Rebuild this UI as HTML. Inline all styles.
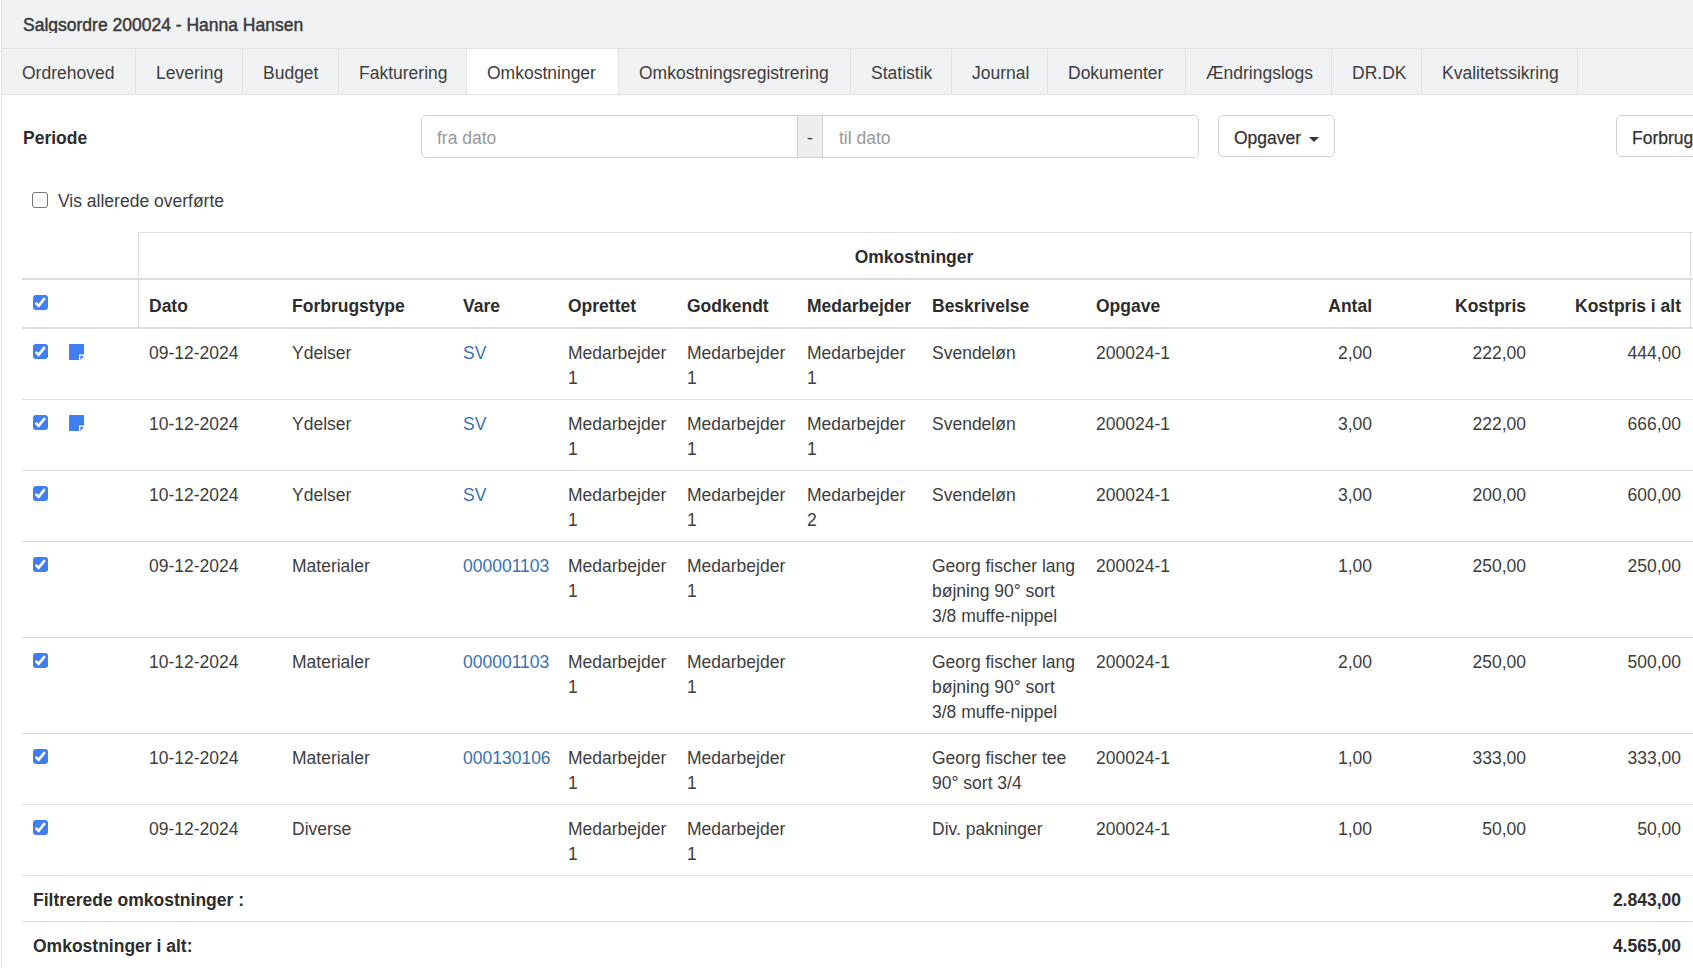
<!DOCTYPE html>
<html><head><meta charset="utf-8">
<style>
html,body{margin:0;padding:0;}
body{width:1693px;height:968px;overflow:hidden;position:relative;background:#fff;font-family:"Liberation Sans",sans-serif;font-size:17.5px;color:#3d3d3d;}
.b{position:absolute;box-sizing:content-box;}
.t{position:absolute;line-height:25px;white-space:nowrap;}
.bold{font-weight:bold;color:#2d2d2d;}
.sb{-webkit-text-stroke:0.45px #333;}
.ph{color:#999;}
.link{color:#3872b6;}
.btn{color:#333;-webkit-text-stroke:0.25px #333;}
.caret{width:0;height:0;border-left:5px solid transparent;border-right:5px solid transparent;border-top:5px solid #333;}
.cbu{width:14px;height:14px;border:1px solid #767676;border-radius:3px;background:#fff;}
</style></head><body>
<div class="b" style="left:1px;top:0px;width:1px;height:968px;background:#e1e4e3"></div>
<div class="b" style="left:2px;top:0px;width:1691px;height:48px;background:#f0f2f4"></div>
<div class="b" style="left:2px;top:48px;width:1691px;height:1px;background:#e1e3e4"></div>
<div class="b" style="left:0;top:0;width:1693px;height:33px;overflow:hidden">
<div class="t sb" style="left:23px;top:13px;">Salgsordre 200024 - Hanna Hansen</div>
</div>
<div class="b" style="left:2px;top:49px;width:1691px;height:45px;background:#f0f2f4"></div>
<div class="b" style="left:135px;top:49px;width:1px;height:45px;background:#e1e3e4"></div>
<div class="t " style="left:22px;top:61px;">Ordrehoved</div>
<div class="b" style="left:242px;top:49px;width:1px;height:45px;background:#e1e3e4"></div>
<div class="t " style="left:156px;top:61px;">Levering</div>
<div class="b" style="left:338px;top:49px;width:1px;height:45px;background:#e1e3e4"></div>
<div class="t " style="left:263px;top:61px;">Budget</div>
<div class="b" style="left:466px;top:49px;width:1px;height:45px;background:#e1e3e4"></div>
<div class="t " style="left:359px;top:61px;">Fakturering</div>
<div class="b" style="left:467px;top:49px;width:151px;height:45px;background:#fff"></div>
<div class="b" style="left:618px;top:49px;width:1px;height:45px;background:#e1e3e4"></div>
<div class="t " style="left:487px;top:61px;">Omkostninger</div>
<div class="b" style="left:850px;top:49px;width:1px;height:45px;background:#e1e3e4"></div>
<div class="t " style="left:639px;top:61px;">Omkostningsregistrering</div>
<div class="b" style="left:951px;top:49px;width:1px;height:45px;background:#e1e3e4"></div>
<div class="t " style="left:871px;top:61px;">Statistik</div>
<div class="b" style="left:1047px;top:49px;width:1px;height:45px;background:#e1e3e4"></div>
<div class="t " style="left:972px;top:61px;">Journal</div>
<div class="b" style="left:1185px;top:49px;width:1px;height:45px;background:#e1e3e4"></div>
<div class="t " style="left:1068px;top:61px;">Dokumenter</div>
<div class="b" style="left:1331px;top:49px;width:1px;height:45px;background:#e1e3e4"></div>
<div class="t " style="left:1206px;top:61px;">Ændringslogs</div>
<div class="b" style="left:1421px;top:49px;width:1px;height:45px;background:#e1e3e4"></div>
<div class="t " style="left:1352px;top:61px;">DR.DK</div>
<div class="b" style="left:1577px;top:49px;width:1px;height:45px;background:#e1e3e4"></div>
<div class="t " style="left:1442px;top:61px;">Kvalitetssikring</div>
<div class="b" style="left:1px;top:94px;width:1692px;height:1px;background:#e1e3e4"></div>
<div class="t bold" style="left:23px;top:126px;">Periode</div>
<div class="b" style="left:421px;top:115px;width:776px;height:41px;border:1px solid #d2d2d2;border-radius:5px"></div>
<div class="b" style="left:797px;top:115px;width:24px;height:41px;background:#eeeeee;border-left:1px solid #d2d2d2;border-right:1px solid #d2d2d2;border-top:1px solid #d2d2d2;border-bottom:1px solid #d2d2d2"></div>
<div class="t " style="left:807px;top:126px;">-</div>
<div class="t ph" style="left:437px;top:126px;">fra dato</div>
<div class="t ph" style="left:839px;top:126px;">til dato</div>
<div class="b" style="left:1218px;top:115px;width:115px;height:40px;border:1px solid #d2d2d2;border-radius:5px"></div>
<div class="t btn" style="left:1234px;top:126px;">Opgaver</div>
<div class="b caret" style="left:1309px;top:137px"></div>
<div class="b" style="left:1616px;top:115px;width:120px;height:40px;border:1px solid #d2d2d2;border-radius:5px"></div>
<div class="t btn" style="left:1632px;top:126px;">Forbrugstype</div>
<div class="b cbu" style="left:32px;top:192px"></div>
<div class="t " style="left:58px;top:189px;">Vis allerede overførte</div>
<div class="b" style="left:138px;top:232px;width:1555px;height:1px;background:#dddddd"></div>
<div class="b" style="left:138px;top:232px;width:1px;height:96px;background:#dddddd"></div>
<div class="b" style="left:1690px;top:232px;width:1px;height:96px;background:#dddddd"></div>
<div class="b" style="left:22px;top:278px;width:1671px;height:2px;background:#dddddd"></div>
<div class="b" style="left:22px;top:327px;width:1671px;height:2px;background:#dddddd"></div>
<div class="t bold c" style="left:914px;top:245px;transform:translateX(-50%)">Omkostninger</div>
<svg class="b" style="left:33px;top:295px" width="15" height="15" viewBox="0 0 15 15"><rect x="0" y="0" width="15" height="15" rx="3" fill="#3f7ff3"/><path d="M2.6 7.9 L5.6 10.8 L11.8 3.1" fill="none" stroke="#fff" stroke-width="2.6"/></svg>
<div class="t bold" style="left:149px;top:294px;">Dato</div>
<div class="t bold" style="left:292px;top:294px;">Forbrugstype</div>
<div class="t bold" style="left:463px;top:294px;">Vare</div>
<div class="t bold" style="left:568px;top:294px;">Oprettet</div>
<div class="t bold" style="left:687px;top:294px;">Godkendt</div>
<div class="t bold" style="left:807px;top:294px;">Medarbejder</div>
<div class="t bold" style="left:932px;top:294px;">Beskrivelse</div>
<div class="t bold" style="left:1096px;top:294px;">Opgave</div>
<div class="t r bold" style="right:321px;top:294px;">Antal</div>
<div class="t r bold" style="right:167px;top:294px;">Kostpris</div>
<div class="t r bold" style="right:12px;top:294px;">Kostpris i alt</div>
<svg class="b" style="left:33px;top:344px" width="15" height="15" viewBox="0 0 15 15"><rect x="0" y="0" width="15" height="15" rx="3" fill="#3f7ff3"/><path d="M2.6 7.9 L5.6 10.8 L11.8 3.1" fill="none" stroke="#fff" stroke-width="2.6"/></svg>
<svg class="b" style="left:68px;top:344px" width="17" height="17" viewBox="0 0 17 17"><path d="M1 0 H16 V10.5 H11 V16 H1 Z" fill="#3f7ff3"/><path d="M12.3 12 H16 L12.3 16 Z" fill="#3f7ff3"/></svg>
<div class="t " style="left:149px;top:341px;">09-12-2024</div>
<div class="t " style="left:292px;top:341px;">Ydelser</div>
<div class="t link" style="left:463px;top:341px;">SV</div>
<div class="t " style="left:568px;top:341px;">Medarbejder<br>1</div>
<div class="t " style="left:687px;top:341px;">Medarbejder<br>1</div>
<div class="t " style="left:807px;top:341px;">Medarbejder<br>1</div>
<div class="t " style="left:932px;top:341px;">Svendeløn</div>
<div class="t " style="left:1096px;top:341px;">200024-1</div>
<div class="t r " style="right:321px;top:341px;">2,00</div>
<div class="t r " style="right:167px;top:341px;">222,00</div>
<div class="t r " style="right:12px;top:341px;">444,00</div>
<div class="b" style="left:22px;top:399px;width:1671px;height:1px;background:#dddddd"></div>
<svg class="b" style="left:33px;top:415px" width="15" height="15" viewBox="0 0 15 15"><rect x="0" y="0" width="15" height="15" rx="3" fill="#3f7ff3"/><path d="M2.6 7.9 L5.6 10.8 L11.8 3.1" fill="none" stroke="#fff" stroke-width="2.6"/></svg>
<svg class="b" style="left:68px;top:415px" width="17" height="17" viewBox="0 0 17 17"><path d="M1 0 H16 V10.5 H11 V16 H1 Z" fill="#3f7ff3"/><path d="M12.3 12 H16 L12.3 16 Z" fill="#3f7ff3"/></svg>
<div class="t " style="left:149px;top:412px;">10-12-2024</div>
<div class="t " style="left:292px;top:412px;">Ydelser</div>
<div class="t link" style="left:463px;top:412px;">SV</div>
<div class="t " style="left:568px;top:412px;">Medarbejder<br>1</div>
<div class="t " style="left:687px;top:412px;">Medarbejder<br>1</div>
<div class="t " style="left:807px;top:412px;">Medarbejder<br>1</div>
<div class="t " style="left:932px;top:412px;">Svendeløn</div>
<div class="t " style="left:1096px;top:412px;">200024-1</div>
<div class="t r " style="right:321px;top:412px;">3,00</div>
<div class="t r " style="right:167px;top:412px;">222,00</div>
<div class="t r " style="right:12px;top:412px;">666,00</div>
<div class="b" style="left:22px;top:470px;width:1671px;height:1px;background:#dddddd"></div>
<svg class="b" style="left:33px;top:486px" width="15" height="15" viewBox="0 0 15 15"><rect x="0" y="0" width="15" height="15" rx="3" fill="#3f7ff3"/><path d="M2.6 7.9 L5.6 10.8 L11.8 3.1" fill="none" stroke="#fff" stroke-width="2.6"/></svg>
<div class="t " style="left:149px;top:483px;">10-12-2024</div>
<div class="t " style="left:292px;top:483px;">Ydelser</div>
<div class="t link" style="left:463px;top:483px;">SV</div>
<div class="t " style="left:568px;top:483px;">Medarbejder<br>1</div>
<div class="t " style="left:687px;top:483px;">Medarbejder<br>1</div>
<div class="t " style="left:807px;top:483px;">Medarbejder<br>2</div>
<div class="t " style="left:932px;top:483px;">Svendeløn</div>
<div class="t " style="left:1096px;top:483px;">200024-1</div>
<div class="t r " style="right:321px;top:483px;">3,00</div>
<div class="t r " style="right:167px;top:483px;">200,00</div>
<div class="t r " style="right:12px;top:483px;">600,00</div>
<div class="b" style="left:22px;top:541px;width:1671px;height:1px;background:#dddddd"></div>
<svg class="b" style="left:33px;top:557px" width="15" height="15" viewBox="0 0 15 15"><rect x="0" y="0" width="15" height="15" rx="3" fill="#3f7ff3"/><path d="M2.6 7.9 L5.6 10.8 L11.8 3.1" fill="none" stroke="#fff" stroke-width="2.6"/></svg>
<div class="t " style="left:149px;top:554px;">09-12-2024</div>
<div class="t " style="left:292px;top:554px;">Materialer</div>
<div class="t link" style="left:463px;top:554px;">000001103</div>
<div class="t " style="left:568px;top:554px;">Medarbejder<br>1</div>
<div class="t " style="left:687px;top:554px;">Medarbejder<br>1</div>
<div class="t " style="left:932px;top:554px;">Georg fischer lang<br>bøjning 90° sort<br>3/8 muffe-nippel</div>
<div class="t " style="left:1096px;top:554px;">200024-1</div>
<div class="t r " style="right:321px;top:554px;">1,00</div>
<div class="t r " style="right:167px;top:554px;">250,00</div>
<div class="t r " style="right:12px;top:554px;">250,00</div>
<div class="b" style="left:22px;top:637px;width:1671px;height:1px;background:#dddddd"></div>
<svg class="b" style="left:33px;top:653px" width="15" height="15" viewBox="0 0 15 15"><rect x="0" y="0" width="15" height="15" rx="3" fill="#3f7ff3"/><path d="M2.6 7.9 L5.6 10.8 L11.8 3.1" fill="none" stroke="#fff" stroke-width="2.6"/></svg>
<div class="t " style="left:149px;top:650px;">10-12-2024</div>
<div class="t " style="left:292px;top:650px;">Materialer</div>
<div class="t link" style="left:463px;top:650px;">000001103</div>
<div class="t " style="left:568px;top:650px;">Medarbejder<br>1</div>
<div class="t " style="left:687px;top:650px;">Medarbejder<br>1</div>
<div class="t " style="left:932px;top:650px;">Georg fischer lang<br>bøjning 90° sort<br>3/8 muffe-nippel</div>
<div class="t " style="left:1096px;top:650px;">200024-1</div>
<div class="t r " style="right:321px;top:650px;">2,00</div>
<div class="t r " style="right:167px;top:650px;">250,00</div>
<div class="t r " style="right:12px;top:650px;">500,00</div>
<div class="b" style="left:22px;top:733px;width:1671px;height:1px;background:#dddddd"></div>
<svg class="b" style="left:33px;top:749px" width="15" height="15" viewBox="0 0 15 15"><rect x="0" y="0" width="15" height="15" rx="3" fill="#3f7ff3"/><path d="M2.6 7.9 L5.6 10.8 L11.8 3.1" fill="none" stroke="#fff" stroke-width="2.6"/></svg>
<div class="t " style="left:149px;top:746px;">10-12-2024</div>
<div class="t " style="left:292px;top:746px;">Materialer</div>
<div class="t link" style="left:463px;top:746px;">000130106</div>
<div class="t " style="left:568px;top:746px;">Medarbejder<br>1</div>
<div class="t " style="left:687px;top:746px;">Medarbejder<br>1</div>
<div class="t " style="left:932px;top:746px;">Georg fischer tee<br>90° sort 3/4</div>
<div class="t " style="left:1096px;top:746px;">200024-1</div>
<div class="t r " style="right:321px;top:746px;">1,00</div>
<div class="t r " style="right:167px;top:746px;">333,00</div>
<div class="t r " style="right:12px;top:746px;">333,00</div>
<div class="b" style="left:22px;top:804px;width:1671px;height:1px;background:#dddddd"></div>
<svg class="b" style="left:33px;top:820px" width="15" height="15" viewBox="0 0 15 15"><rect x="0" y="0" width="15" height="15" rx="3" fill="#3f7ff3"/><path d="M2.6 7.9 L5.6 10.8 L11.8 3.1" fill="none" stroke="#fff" stroke-width="2.6"/></svg>
<div class="t " style="left:149px;top:817px;">09-12-2024</div>
<div class="t " style="left:292px;top:817px;">Diverse</div>
<div class="t " style="left:568px;top:817px;">Medarbejder<br>1</div>
<div class="t " style="left:687px;top:817px;">Medarbejder<br>1</div>
<div class="t " style="left:932px;top:817px;">Div. pakninger</div>
<div class="t " style="left:1096px;top:817px;">200024-1</div>
<div class="t r " style="right:321px;top:817px;">1,00</div>
<div class="t r " style="right:167px;top:817px;">50,00</div>
<div class="t r " style="right:12px;top:817px;">50,00</div>
<div class="b" style="left:22px;top:875px;width:1671px;height:1px;background:#dddddd"></div>
<div class="t bold" style="left:33px;top:888px;">Filtrerede omkostninger :</div>
<div class="t r bold" style="right:12px;top:888px;">2.843,00</div>
<div class="b" style="left:22px;top:921px;width:1671px;height:1px;background:#dddddd"></div>
<div class="t bold" style="left:33px;top:934px;">Omkostninger i alt:</div>
<div class="t r bold" style="right:12px;top:934px;">4.565,00</div>
</body></html>
